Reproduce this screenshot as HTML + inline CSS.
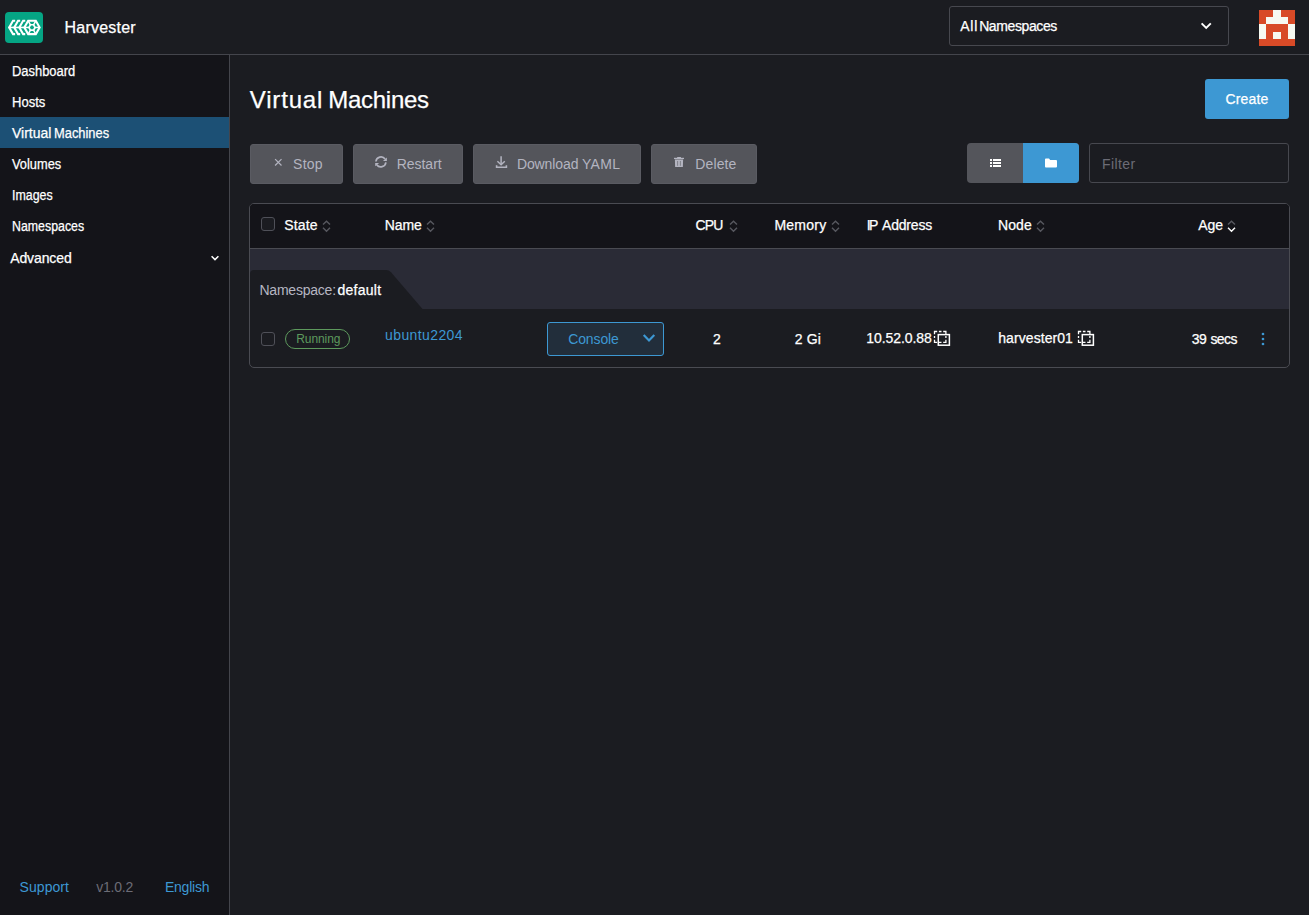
<!DOCTYPE html>
<html>
<head>
<meta charset="utf-8">
<title>Harvester</title>
<style>
*{box-sizing:border-box;margin:0;padding:0}
html,body{width:1309px;height:915px;overflow:hidden;background:#1b1c21;}
body{font-family:"Liberation Sans",sans-serif;color:#fff;font-size:14px;position:relative}
.abs{position:absolute}
.t{position:absolute;white-space:nowrap;line-height:20px;height:20px;transform-origin:0 50%;-webkit-text-stroke:0.25px currentColor}
#header{position:absolute;left:0;top:0;width:1309px;height:55px;background:#1b1c21;border-bottom:1px solid #44454c}
#side{position:absolute;left:0;top:55px;width:230px;height:860px;background:#141419;border-right:1px solid #44454c}
#logo{position:absolute;left:5px;top:12px;width:38px;height:31px;border-radius:4px;background:#05a584}
#nssel{position:absolute;left:949px;top:6px;width:280px;height:40px;border:1px solid #47484f;border-radius:3px}
#avatar{position:absolute;left:1259px;top:10px;width:36px;height:36px;background:#d84a27}
.navact{position:absolute;left:0;top:117px;width:229px;height:31px;background:#1c5075}
.btn{position:absolute;top:144px;height:40px;background:#54555b;border-radius:3px;border:1px solid #5a5b62}
.btn .t{color:#b3b4c0}
#create{position:absolute;left:1205px;top:79px;width:84px;height:40px;background:#3d98d3;border-radius:3px}
#tog{position:absolute;left:967px;top:143px;width:112px;height:40px;border-radius:4px;overflow:hidden;background:#54555b}
#tog .on{position:absolute;left:56px;top:0;width:56px;height:40px;background:#3d98d3}
#filter{position:absolute;left:1089px;top:143px;width:200px;height:40px;border:1px solid #47484f;border-radius:3px}
#table{position:absolute;left:249px;top:203px;width:1041px;height:165px;border:1px solid #4a4b52;border-radius:5px;overflow:hidden;background:#1b1c21}
#thead{position:absolute;left:0;top:0;width:1039px;height:45px;background:#141419;border-bottom:1px solid #4a4b52}
#group{position:absolute;left:0;top:45px;width:1039px;height:60px;background:#2a2b36}
.cb{position:absolute;width:14px;height:14px;border:1px solid #4f5058;border-radius:3px;background:#1b1c21}
.link{color:#3d98d3}
</style>
</head>
<body>
<div id="header">
  <div id="logo"><svg width="38" height="31" viewBox="0 0 38 31" style="position:absolute;left:0;top:0"><polyline points="20.23,8.82 18.12,8.82 14.30,15.45 18.12,22.08 20.23,22.08" fill="none" stroke="#fff" stroke-width="2.1" stroke-linejoin="miter"/><polyline points="15.17,8.82 13.07,8.82 9.25,15.45 13.07,22.08 15.17,22.08" fill="none" stroke="#fff" stroke-width="2.1" stroke-linejoin="miter"/><polyline points="10.13,8.82 8.03,8.82 4.20,15.45 8.03,22.08 10.13,22.08" fill="none" stroke="#fff" stroke-width="2.1" stroke-linejoin="miter"/><rect x="3.5" y="14.65" width="17" height="1.6" fill="#fff"/><polygon points="34.65,15.45 30.82,22.08 23.18,22.08 19.35,15.45 23.17,8.82 30.82,8.82" fill="none" stroke="#fff" stroke-width="2.1" stroke-linejoin="miter"/><polygon points="30.10,15.45 28.55,18.13 25.45,18.13 23.90,15.45 25.45,12.77 28.55,12.77" fill="none" stroke="#fff" stroke-width="1.7"/><line x1="34.65" y1="15.45" x2="30.10" y2="15.45" stroke="#fff" stroke-width="1.5"/><line x1="30.82" y1="22.08" x2="28.55" y2="18.13" stroke="#fff" stroke-width="1.5"/><line x1="23.18" y1="22.08" x2="25.45" y2="18.13" stroke="#fff" stroke-width="1.5"/><line x1="19.35" y1="15.45" x2="23.90" y2="15.45" stroke="#fff" stroke-width="1.5"/><line x1="23.17" y1="8.82" x2="25.45" y2="12.77" stroke="#fff" stroke-width="1.5"/><line x1="30.82" y1="8.82" x2="28.55" y2="12.77" stroke="#fff" stroke-width="1.5"/></svg></div>
    <div id="nssel"></div>
    <div id="avatar"><svg width="36" height="36" viewBox="0 0 36 36" style="position:absolute;left:0;top:0" shape-rendering="crispEdges"><rect x="14.40" y="0.00" width="7.20" height="7.20" fill="#f7f9f1"/><rect x="7.20" y="7.20" width="7.20" height="7.20" fill="#f7f9f1"/><rect x="14.40" y="7.20" width="7.20" height="7.20" fill="#f7f9f1"/><rect x="21.60" y="7.20" width="7.20" height="7.20" fill="#f7f9f1"/><rect x="0.00" y="14.40" width="7.20" height="7.20" fill="#f7f9f1"/><rect x="28.80" y="14.40" width="7.20" height="7.20" fill="#f7f9f1"/><rect x="0.00" y="21.60" width="7.20" height="7.20" fill="#f7f9f1"/><rect x="14.40" y="21.60" width="7.20" height="7.20" fill="#f7f9f1"/><rect x="28.80" y="21.60" width="7.20" height="7.20" fill="#f7f9f1"/></svg></div>
</div>
<div id="side">
</div>
<div class="navact"></div>

<div id="create"></div>

<div class="btn" style="left:250px;width:93px"></div>
<div class="btn" style="left:353px;width:110px"></div>
<div class="btn" style="left:473px;width:168px"></div>
<div class="btn" style="left:651px;width:106px"></div>

<div id="tog"><div class="on"></div></div>
<div id="filter"></div>

<div id="table">
  <div id="thead"></div>
  <div id="group"></div>
</div>
<svg class="abs" style="left:250px;top:270px" width="180" height="39" viewBox="0 0 180 39"><path d="M0 4 Q0 0 4 0 H136 Q139 0 141 2.2 L172.5 39 H0 Z" fill="#1b1c21"/></svg>
<div class="abs" style="left:547px;top:322px;width:117px;height:34px;border:1px solid #3d98d3;border-radius:3px;background:#222e3b"></div>
<div class="cb" style="left:261px;top:217px"></div>
<div class="cb" style="left:261px;top:332px"></div>


<svg class="abs" style="left:1199px;top:20px" width="14" height="12" viewBox="0 0 14 12"><polyline points="2.6,3.3 7.2,8 11.8,3.3" fill="none" stroke="#fff" stroke-width="1.9"/></svg>
<svg class="abs" style="left:209px;top:253px" width="12" height="10" viewBox="0 0 12 10"><polyline points="2.6,3.2 6,6.6 9.4,3.2" fill="none" stroke="#fff" stroke-width="1.5"/></svg>
<svg class="abs" style="left:273px;top:157px" width="11" height="11" viewBox="0 0 11 11"><path d="M2.1 2.1 L8.5 8.5 M8.5 2.1 L2.1 8.5" fill="none" stroke="#b3b4c0" stroke-width="1.2"/></svg>
<svg class="abs" style="left:374px;top:155px" width="15" height="15" viewBox="0 0 15 15"><g fill="none" stroke="#b3b4c0" stroke-width="1.65"><path d="M1.9 6.5 A5.1 5.1 0 0 1 11.1 4.1"/><path d="M11.9 7.3 A5.1 5.1 0 0 1 2.7 9.7"/></g><path d="M12.9 2.6 L12.9 5.9 L8.9 5.9 Z" fill="#b3b4c0"/><path d="M1.2 11.2 L1.2 7.9 L5.2 7.9 Z" fill="#b3b4c0"/></svg>
<svg class="abs" style="left:494px;top:154px" width="15" height="16" viewBox="0 0 15 16"><g fill="none" stroke="#b3b4c0" stroke-width="1.5"><path d="M7.1 2.2 V10.4"/><path d="M3.4 7.3 L7.1 10.7 L10.8 7.3"/><path d="M2.6 11.3 V13.3 H12.4 V11.3" stroke-width="1.6"/></g></svg>
<svg class="abs" style="left:673px;top:155px" width="13" height="14" viewBox="0 0 13 14"><g fill="#b3b4c0"><rect x="1" y="2.8" width="10" height="1.3"/><rect x="4.1" y="1.9" width="3.9" height="1.3" rx="0.4"/><path d="M1.9 4.5 H10.1 L9.9 11.6 Q9.9 12.1 9.4 12.1 H2.6 Q2.1 12.1 2.1 11.6 Z"/></g><g stroke="#6a6b72" stroke-width="0.7"><path d="M4.6 6 V10.8 M7.4 6 V10.8"/></g></svg>
<svg class="abs" style="left:989px;top:158px" width="13" height="10" viewBox="0 0 13 10" shape-rendering="crispEdges"><g fill="#fff"><rect x="1" y="1" width="2" height="2"/><rect x="4" y="1" width="8" height="2"/><rect x="1" y="4" width="2" height="2"/><rect x="4" y="4" width="8" height="2"/><rect x="1" y="7" width="2" height="2"/><rect x="4" y="7" width="8" height="2"/></g></svg>
<svg class="abs" style="left:1044px;top:157px" width="14" height="12" viewBox="0 0 14 12"><path d="M1 2.4 Q1 1.5 1.9 1.5 H5 L6.2 3 H12 Q13 3 13 4 V9.6 Q13 10.5 12 10.5 H1.9 Q1 10.5 1 9.6 Z" fill="#fff"/></svg>
<svg class="abs" style="left:321.1px;top:219px" width="11" height="15" viewBox="0 0 11 15"><g fill="none" stroke-width="1.4"><polyline points="2,5.6 5.5,2.2 9,5.6" stroke="#57585f"/><polyline points="2,8.8 5.5,12.2 9,8.8" stroke="#57585f"/></g></svg>
<svg class="abs" style="left:425.4px;top:219px" width="11" height="15" viewBox="0 0 11 15"><g fill="none" stroke-width="1.4"><polyline points="2,5.6 5.5,2.2 9,5.6" stroke="#57585f"/><polyline points="2,8.8 5.5,12.2 9,8.8" stroke="#57585f"/></g></svg>
<svg class="abs" style="left:727.9px;top:219px" width="11" height="15" viewBox="0 0 11 15"><g fill="none" stroke-width="1.4"><polyline points="2,5.6 5.5,2.2 9,5.6" stroke="#57585f"/><polyline points="2,8.8 5.5,12.2 9,8.8" stroke="#57585f"/></g></svg>
<svg class="abs" style="left:830.4px;top:219px" width="11" height="15" viewBox="0 0 11 15"><g fill="none" stroke-width="1.4"><polyline points="2,5.6 5.5,2.2 9,5.6" stroke="#57585f"/><polyline points="2,8.8 5.5,12.2 9,8.8" stroke="#57585f"/></g></svg>
<svg class="abs" style="left:1035.4px;top:219px" width="11" height="15" viewBox="0 0 11 15"><g fill="none" stroke-width="1.4"><polyline points="2,5.6 5.5,2.2 9,5.6" stroke="#57585f"/><polyline points="2,8.8 5.5,12.2 9,8.8" stroke="#57585f"/></g></svg>
<svg class="abs" style="left:1226.1px;top:219px" width="11" height="15" viewBox="0 0 11 15"><g fill="none" stroke-width="1.4"><polyline points="2,5.6 5.5,2.2 9,5.6" stroke="#57585f"/><polyline points="2,8.8 5.5,12.2 9,8.8" stroke="#ffffff"/></g></svg>
<svg class="abs" style="left:932.5px;top:330.4px" width="19" height="18" viewBox="0 0 19 18"><g fill="none" stroke="#fff"><path d="M1.5 4.2 V1.5 H4.2 M5.9 1.5 H8.5 M10.2 1.5 H12.9 V4.2 M1.5 5.9 V8 M1.5 9.7 V12.3 H4.2 M12.9 5.9 V8 M12.9 9.7 V12.3 H10.2 M5.9 12.3 H8.5" stroke-width="1.3"/><rect x="5.3" y="4.6" width="11.1" height="10.6" stroke-width="1.5"/></g></svg>
<svg class="abs" style="left:1076.8px;top:330.4px" width="19" height="18" viewBox="0 0 19 18"><g fill="none" stroke="#fff"><path d="M1.5 4.2 V1.5 H4.2 M5.9 1.5 H8.5 M10.2 1.5 H12.9 V4.2 M1.5 5.9 V8 M1.5 9.7 V12.3 H4.2 M12.9 5.9 V8 M12.9 9.7 V12.3 H10.2 M5.9 12.3 H8.5" stroke-width="1.3"/><rect x="5.3" y="4.6" width="11.1" height="10.6" stroke-width="1.5"/></g></svg>
<svg class="abs" style="left:1259px;top:331px" width="8" height="16" viewBox="0 0 8 16"><g fill="#3d98d3"><circle cx="4" cy="3" r="1.35"/><circle cx="4" cy="8" r="1.35"/><circle cx="4" cy="13" r="1.35"/></g></svg>
<svg class="abs" style="left:641px;top:332px" width="16" height="12" viewBox="0 0 16 12"><polyline points="2.7,3.0 8,8.4 13.3,3.0" fill="none" stroke="#3d98d3" stroke-width="2.2"/></svg>
<div class="abs" style="left:285px;top:329px;width:65px;height:20px;border:1px solid #5d995d;border-radius:10px"></div>
<!--TEXT-->
<span class="t" id="w_harv" style="left:64.55px;top:17.50px;font-size:16px;letter-spacing:0.220px;color:#ffffff">Harvester</span>
<span class="t" id="w_all" style="left:960.18px;top:16.00px;font-size:14px;letter-spacing:0.781px;color:#ffffff">All</span>
<span class="t" id="w_nss" style="left:979.13px;top:16.00px;font-size:14px;letter-spacing:-0.395px;color:#ffffff">Namespaces</span>
<span class="t" id="w_dash" style="left:11.67px;top:61.00px;font-size:14px;letter-spacing:0.000px;color:#ffffff;transform:scaleX(0.9235)">Dashboard</span>
<span class="t" id="w_hosts" style="left:11.52px;top:92.00px;font-size:14px;letter-spacing:0.000px;color:#ffffff;transform:scaleX(0.9303)">Hosts</span>
<span class="t" id="w_vmv" style="left:11.60px;top:123.00px;font-size:14px;letter-spacing:0.000px;color:#ffffff;transform:scaleX(0.9980)">Virtual</span>
<span class="t" id="w_vmm" style="left:53.99px;top:123.00px;font-size:14px;letter-spacing:0.000px;color:#ffffff;transform:scaleX(0.9197)">Machines</span>
<span class="t" id="w_vol" style="left:12.47px;top:154.00px;font-size:14px;letter-spacing:0.000px;color:#ffffff;transform:scaleX(0.9169)">Volumes</span>
<span class="t" id="w_img" style="left:11.68px;top:185.00px;font-size:14px;letter-spacing:0.000px;color:#ffffff;transform:scaleX(0.8866)">Images</span>
<span class="t" id="w_ns" style="left:11.96px;top:216.00px;font-size:14px;letter-spacing:0.000px;color:#ffffff;transform:scaleX(0.8827)">Namespaces</span>
<span class="t" id="w_adv" style="left:10.22px;top:248.00px;font-size:14px;letter-spacing:-0.114px;color:#ffffff">Advanced</span>
<span class="t" id="w_sup" style="left:19.61px;top:877.00px;font-size:14px;letter-spacing:0.053px;color:#3d98d3;-webkit-text-stroke:0">Support</span>
<span class="t" id="w_ver" style="left:96.23px;top:877.00px;font-size:14px;letter-spacing:-0.224px;color:#6c6c76;-webkit-text-stroke:0">v1.0.2</span>
<span class="t" id="w_eng" style="left:164.95px;top:877.00px;font-size:14px;letter-spacing:-0.234px;color:#3d98d3;-webkit-text-stroke:0">English</span>
<span class="t" id="w_tv" style="left:249.80px;top:89.50px;font-size:24px;letter-spacing:0.825px;color:#ffffff">Virtual</span>
<span class="t" id="w_tm" style="left:328.29px;top:89.50px;font-size:24px;letter-spacing:-0.282px;color:#ffffff">Machines</span>
<span class="t" id="w_create" style="left:1225.40px;top:89.00px;font-size:14px;letter-spacing:0.169px;color:#ffffff">Create</span>
<span class="t" id="w_stop" style="left:293.11px;top:154.00px;font-size:14px;letter-spacing:0.208px;color:#b3b4c0;-webkit-text-stroke:0">Stop</span>
<span class="t" id="w_restart" style="left:396.69px;top:154.00px;font-size:14px;letter-spacing:-0.025px;color:#b3b4c0;-webkit-text-stroke:0">Restart</span>
<span class="t" id="w_dl" style="left:516.91px;top:154.00px;font-size:14px;letter-spacing:-0.101px;color:#b3b4c0;-webkit-text-stroke:0">Download</span>
<span class="t" id="w_yaml" style="left:581.90px;top:154.00px;font-size:14px;letter-spacing:0.373px;color:#b3b4c0;-webkit-text-stroke:0">YAML</span>
<span class="t" id="w_del" style="left:695.31px;top:154.00px;font-size:14px;letter-spacing:0.115px;color:#b3b4c0;-webkit-text-stroke:0">Delete</span>
<span class="t" id="w_filter" style="left:1102.10px;top:154.00px;font-size:14px;letter-spacing:0.386px;color:#6c6c76;-webkit-text-stroke:0">Filter</span>
<span class="t" id="w_state" style="left:284.25px;top:215.00px;font-size:14px;letter-spacing:0.146px;color:#ffffff">State</span>
<span class="t" id="w_name" style="left:384.78px;top:215.00px;font-size:14px;letter-spacing:-0.138px;color:#ffffff">Name</span>
<span class="t" id="w_cpu" style="left:695.58px;top:215.00px;font-size:14px;letter-spacing:-0.880px;color:#ffffff">CPU</span>
<span class="t" id="w_mem" style="left:774.38px;top:215.00px;font-size:14px;letter-spacing:0.274px;color:#ffffff">Memory</span>
<span class="t" id="w_ip" style="left:866.75px;top:215.00px;font-size:14px;letter-spacing:-1.729px;color:#ffffff">IP</span>
<span class="t" id="w_addr" style="left:882.02px;top:215.00px;font-size:14px;letter-spacing:-0.187px;color:#ffffff">Address</span>
<span class="t" id="w_node" style="left:998.04px;top:215.00px;font-size:14px;letter-spacing:0.095px;color:#ffffff">Node</span>
<span class="t" id="w_age" style="left:1198.20px;top:215.00px;font-size:14px;letter-spacing:0.000px;color:#ffffff">Age</span>
<span class="t" id="w_nsl" style="left:259.46px;top:280.00px;font-size:14px;letter-spacing:-0.223px;color:#b6b6c2;-webkit-text-stroke:0">Namespace:</span>
<span class="t" id="w_def" style="left:337.42px;top:280.00px;font-size:14px;letter-spacing:0.277px;color:#ffffff">default</span>
<span class="t" id="w_run" style="left:296.22px;top:329.00px;font-size:12px;letter-spacing:-0.078px;color:#5d995d;-webkit-text-stroke:0">Running</span>
<span class="t" id="w_ubu" style="left:385.02px;top:325.00px;font-size:14px;letter-spacing:0.395px;color:#3d98d3;-webkit-text-stroke:0">ubuntu2204</span>
<span class="t" id="w_cons" style="left:568.16px;top:329.00px;font-size:14px;letter-spacing:-0.103px;color:#3d98d3;-webkit-text-stroke:0">Console</span>
<span class="t" id="w_two" style="left:713.06px;top:329.00px;font-size:14px;letter-spacing:0.000px;color:#ffffff">2</span>
<span class="t" id="w_gi" style="left:794.77px;top:329.00px;font-size:14px;letter-spacing:0.164px;color:#ffffff">2 Gi</span>
<span class="t" id="w_ipv" style="left:866.24px;top:328.00px;font-size:14px;letter-spacing:-0.071px;color:#ffffff">10.52.0.88</span>
<span class="t" id="w_nodev" style="left:998.26px;top:328.00px;font-size:14px;letter-spacing:0.071px;color:#ffffff">harvester01</span>
<span class="t" id="w_a39" style="left:1191.63px;top:329.00px;font-size:14px;letter-spacing:-0.342px;color:#ffffff">39</span>
<span class="t" id="w_secs" style="left:1210.46px;top:329.00px;font-size:14px;letter-spacing:-0.599px;color:#ffffff">secs</span>
<!--/TEXT-->
</body>
</html>
